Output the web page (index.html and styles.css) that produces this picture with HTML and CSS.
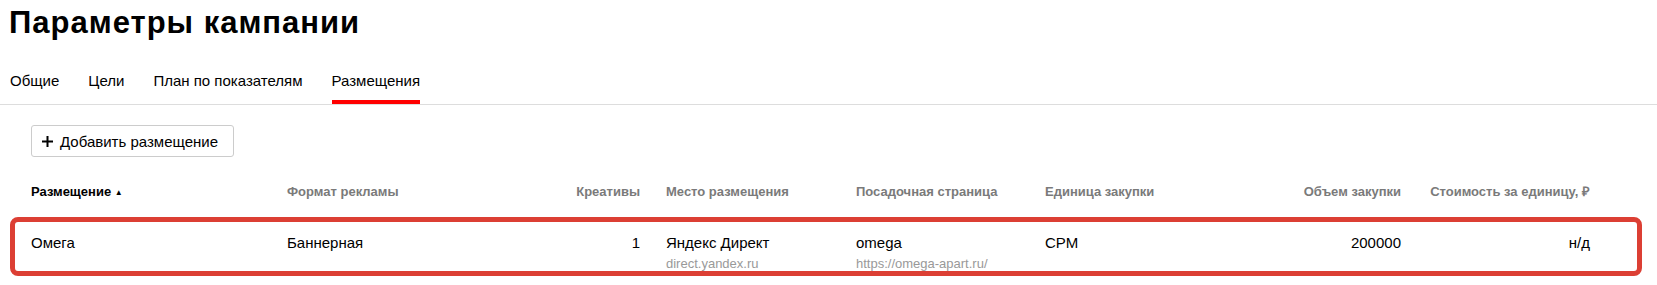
FILE: index.html
```html
<!DOCTYPE html>
<html lang="ru">
<head>
  <meta charset="UTF-8">
  <title>Параметры кампании</title>
  <link rel="stylesheet" href="styles.css">
</head>
<body>

  <h1 class="title">Параметры кампании</h1>

  <div class="tabs">
    <div class="tab">Общие</div>
    <div class="tab">Цели</div>
    <div class="tab">План по показателям</div>
    <div class="tab active">Размещения</div>
  </div>

  <div class="content">
    <button class="add-btn">
      <svg width="11" height="11" viewBox="0 0 11 11"><path d="M5.5 0v11M0 5.5h11" stroke="#000" stroke-width="2"/></svg>
      Добавить размещение
    </button>

    <div class="grid head">
      <div class="cell sorted">Размещение <span class="arrow">▲</span></div>
      <div class="cell">Формат рекламы</div>
      <div class="cell right">Креативы</div>
      <div class="cell">Место размещения</div>
      <div class="cell">Посадочная страница</div>
      <div class="cell">Единица закупки</div>
      <div class="cell right">Объем закупки</div>
      <div class="cell right">Стоимость за единицу, ₽</div>
    </div>

    <div class="row">
      <div class="grid">
        <div class="cell">Омега</div>
        <div class="cell">Баннерная</div>
        <div class="cell right">1</div>
        <div class="cell">Яндекс Директ<div class="sub">direct.yandex.ru</div></div>
        <div class="cell">omega<div class="sub">https://omega-apart.ru/</div></div>
        <div class="cell">CPM</div>
        <div class="cell right">200000</div>
        <div class="cell right">н/д</div>
      </div>
    </div>
  </div>

</body>
</html>
```

FILE: styles.css
```css
body {
  margin: 0;
  font-family: "Liberation Sans", Arial, sans-serif;
  color: #000;
  background: #fff;
}
.title {
  margin: 0;
  padding: 5px 9px 0;
  font-size: 31px;
  line-height: 36px;
  font-weight: bold;
  letter-spacing: 1px;
}
.tabs {
  display: flex;
  gap: 29px;
  margin-top: 30px;
  padding: 0 10px;
  border-bottom: 1px solid #ddd;
}
.tab {
  font-size: 15px;
  line-height: 20px;
  padding-bottom: 9px;
  border-bottom: 4px solid transparent;
}
.tab.active {
  border-bottom-color: #f00;
}
.content {
  padding: 20px 15px 0 10px;
}
.add-btn {
  display: flex;
  align-items: center;
  gap: 7px;
  height: 32px;
  margin-left: 21px;
  padding: 0 15px 0 10px;
  border: 1px solid #ccc;
  border-radius: 3px;
  background: #fff;
  font-family: inherit;
  font-size: 15px;
  color: #000;
}
.grid {
  display: grid;
  grid-template-columns: 256px 266px 113px 190px 189px 198px 184px 189px;
}
.cell {
  padding: 0 13px;
}
.right {
  text-align: right;
}
.head {
  margin: 24px 0 0 8px;
  font-size: 13px;
  line-height: 22px;
  font-weight: bold;
  color: #7a7a7a;
}
.head .sorted {
  color: #000;
}
.arrow {
  font-size: 8px;
  vertical-align: 1px;
}
.row {
  box-sizing: border-box;
  margin-top: 13px;
  height: 59px;
  border: 5px solid #dc3f34;
  border-radius: 8px;
  padding: 11px 0 0 3px;
  font-size: 15px;
  line-height: 20px;
}
.sub {
  margin-top: 2px;
  font-size: 13px;
  line-height: 18px;
  color: #999;
}
```
